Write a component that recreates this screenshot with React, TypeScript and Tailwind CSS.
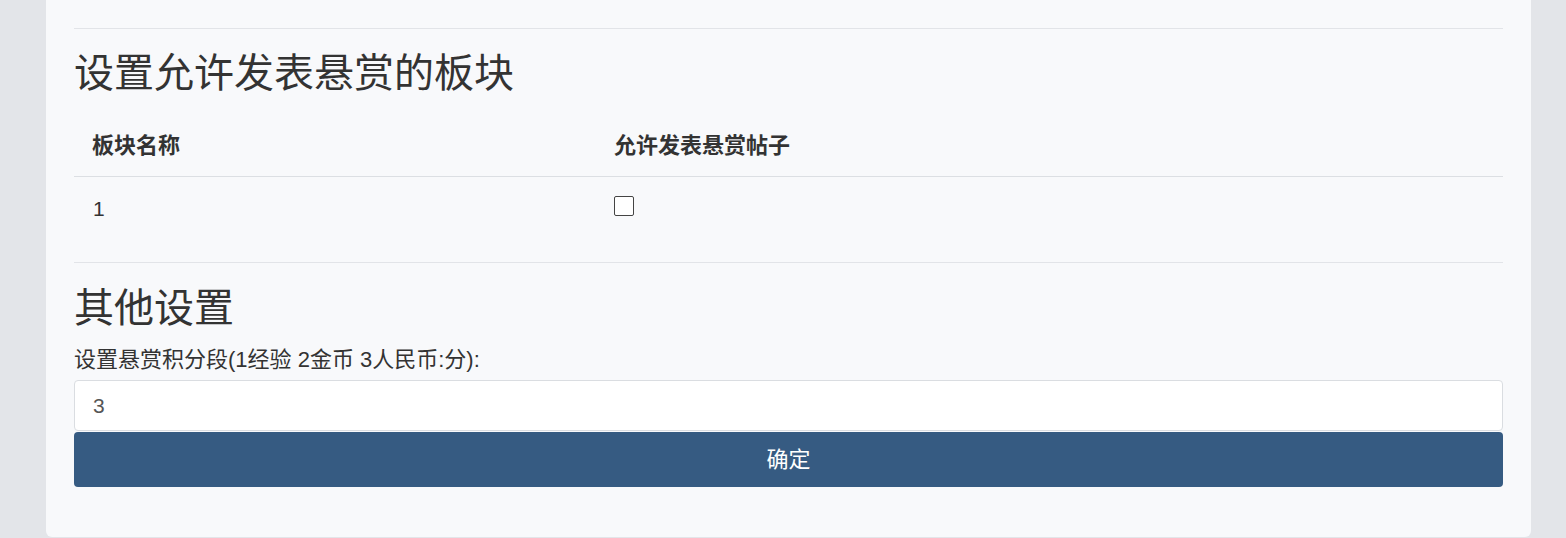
import React, { useState } from 'react';

const font = { fontFamily: '"Liberation Sans", "Noto Sans CJK SC", sans-serif' };

export default function App() {
  const [allowed, setAllowed] = useState(false);
  const [points, setPoints] = useState('3');

  return (
    <div className="w-full h-[538px] bg-[#e3e5e9] overflow-hidden" style={font}>
      <div className="ml-[46px] w-[1485px] h-[537px] bg-[#f8f9fb] rounded-b-md px-[28px] pt-[28px] text-[#333]">
        {/* Section: boards */}
        <div className="border-t border-[#e2e4e8]" />
        <h2 className="mt-[20px] text-[40px] leading-[48px] text-[#333]">设置允许发表悬赏的板块</h2>
        <table className="w-full mt-[19px] border-collapse">
          <thead>
            <tr className="border-b border-[#dcdfe3]">
              <th className="w-[522px] h-[60px] pl-[18px] text-left text-[22px] font-bold">板块名称</th>
              <th className="h-[60px] pl-[18px] text-left text-[22px] font-bold">允许发表悬赏帖子</th>
            </tr>
          </thead>
          <tbody>
            <tr>
              <td className="h-[64px] pl-[19px] text-[21px]">1</td>
              <td className="h-[64px] pl-[18px] align-middle">
                <input
                  type="checkbox"
                  checked={allowed}
                  onChange={(e) => setAllowed(e.target.checked)}
                  className="appearance-none w-[20px] h-[20px] block border-[1.5px] border-[#444] bg-white rounded-[2px] -mt-[4px]"
                />
              </td>
            </tr>
          </tbody>
        </table>
        {/* Section: other */}
        <div className="mt-[22px] border-t border-[#e2e4e8]" />
        <h2 className="mt-[21px] text-[40px] leading-[48px] text-[#333]">其他设置</h2>
        <label className="block mt-[13px] text-[22px] leading-[30px]">设置悬赏积分段(1经验 2金币 3人民币:分):</label>
        <input
          type="text"
          value={points}
          onChange={(e) => setPoints(e.target.value)}
          className="mt-[5px] w-full h-[51px] px-[18px] bg-white border border-[#dadde1] rounded-[4px] text-[21px] text-[#555] outline-none"
        />
        <button className="mt-[1px] w-full h-[55px] bg-[#365b82] rounded-[4px] text-white text-[22px]">确定</button>
      </div>
    </div>
  );
}
